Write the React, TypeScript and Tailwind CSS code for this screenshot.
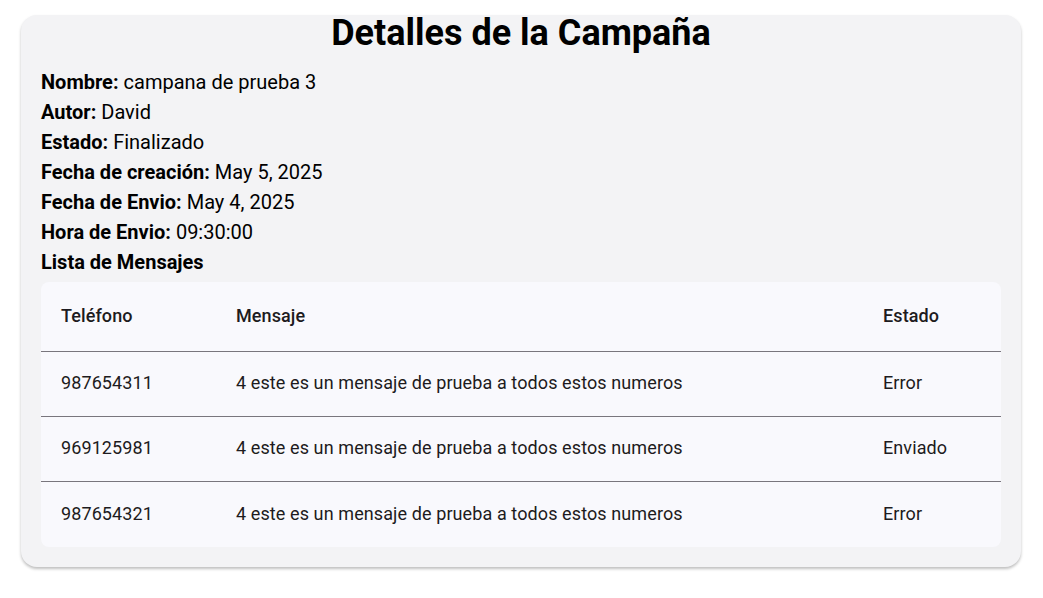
import React from 'react';

const info = [
  { label: 'Nombre:', value: 'campana de prueba 3' },
  { label: 'Autor:', value: 'David' },
  { label: 'Estado:', value: 'Finalizado' },
  { label: 'Fecha de creación:', value: 'May 5, 2025' },
  { label: 'Fecha de Envio:', value: 'May 4, 2025' },
  { label: 'Hora de Envio:', value: '09:30:00' },
];

const mensajes = [
  { telefono: '987654311', mensaje: '4 este es un mensaje de prueba a todos estos numeros', estado: 'Error' },
  { telefono: '969125981', mensaje: '4 este es un mensaje de prueba a todos estos numeros', estado: 'Enviado' },
  { telefono: '987654321', mensaje: '4 este es un mensaje de prueba a todos estos numeros', estado: 'Error' },
];

export default function App() {
  return (
    <div className="min-h-screen bg-white font-['Roboto',sans-serif] px-[21px] pt-[15px]">
      <div className="w-[1000px] rounded-2xl bg-[#f3f3f5] px-5 pb-5 shadow-[0_2px_3px_rgba(0,0,0,0.25)]">
        <h1 className="text-center text-4xl leading-[36px] font-bold text-black">Detalles de la Campaña</h1>

        <div className="mt-4 text-xl leading-[30px] text-black">
          {info.map((item) => (
            <p key={item.label}>
              <span className="font-bold">{item.label}</span> {item.value}
            </p>
          ))}
          <p className="font-bold">Lista de Mensajes</p>
        </div>

        <div className="mt-[5px] overflow-hidden rounded-lg bg-[#f9f9fd] text-[#1d1b20]">
          <table className="w-full border-collapse text-left text-lg tracking-[0.1px]">
            <thead>
              <tr className="h-[69px] border-b border-[#79767d]">
                <th className="w-[195px] pl-5 pb-px font-medium">Teléfono</th>
                <th className="pb-px font-medium">Mensaje</th>
                <th className="w-[118px] pb-px font-medium">Estado</th>
              </tr>
            </thead>
            <tbody>
              {mensajes.map((m, i) => (
                <tr key={m.telefono} className={i < mensajes.length - 1 ? 'h-[65px] border-b border-[#79767d]' : 'h-[66px]'}>
                  <td className="pl-5 pb-px">{m.telefono}</td>
                  <td className="pb-px">{m.mensaje}</td>
                  <td className="pb-px">{m.estado}</td>
                </tr>
              ))}
            </tbody>
          </table>
        </div>
      </div>
    </div>
  );
}
